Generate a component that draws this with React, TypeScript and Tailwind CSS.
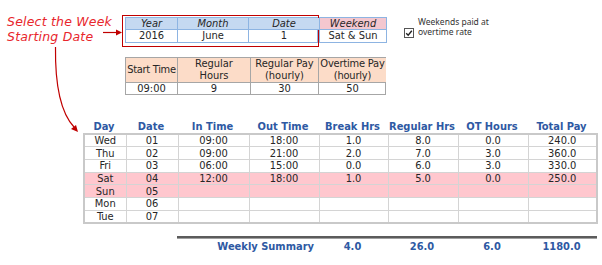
import React from "react";

const dayRows = [
  { day: "Wed", date: "01", inT: "09:00", outT: "18:00", brk: "1.0", reg: "8.0", ot: "0.0", pay: "240.0", weekend: false },
  { day: "Thu", date: "02", inT: "09:00", outT: "21:00", brk: "2.0", reg: "7.0", ot: "3.0", pay: "360.0", weekend: false },
  { day: "Fri", date: "03", inT: "06:00", outT: "15:00", brk: "0.0", reg: "6.0", ot: "3.0", pay: "330.0", weekend: false },
  { day: "Sat", date: "04", inT: "12:00", outT: "18:00", brk: "1.0", reg: "5.0", ot: "0.0", pay: "250.0", weekend: true },
  { day: "Sun", date: "05", inT: "", outT: "", brk: "", reg: "", ot: "", pay: "", weekend: true },
  { day: "Mon", date: "06", inT: "", outT: "", brk: "", reg: "", ot: "", pay: "", weekend: false },
  { day: "Tue", date: "07", inT: "", outT: "", brk: "", reg: "", ot: "", pay: "", weekend: false },
];

const headers = ["Day", "Date", "In Time", "Out Time", "Break Hrs", "Regular Hrs", "OT Hours", "Total Pay"];
const colWidths = [42, 52, 71, 70, 69, 70, 70, 69];

export default function App() {
  return (
    <div className="relative w-[602px] h-[265px] overflow-hidden bg-white text-[#262626] font-['DejaVu_Sans','Liberation_Sans',sans-serif] font-stretch-condensed text-[11px]">
      {/* top row */}
      <div className="flex items-start pt-[15px]">
        <div className="flex w-[122px] items-start pl-[7px]">
          <div className="-mt-[1px] text-[12.5px] leading-[15px] italic text-[#e8262c] font-['DejaVu_Sans',sans-serif] font-stretch-normal tracking-[0.2px]">
            <div>Select the Week</div>
            <div>Starting Date</div>
          </div>
        </div>

        <div className="w-[197px] border border-[#c00000] pl-[2px] pt-[1px] pb-[3px]">
          <div className="grid grid-cols-[52px_71px_70px] border border-[#8db4e2] w-[193px]">
            <div className="h-[12px] bg-[#c5d9f1] text-center italic leading-[12px] border-r border-b border-[#8db4e2]">Year</div>
            <div className="h-[12px] bg-[#c5d9f1] text-center italic leading-[12px] border-r border-b border-[#8db4e2]">Month</div>
            <div className="h-[12px] bg-[#c5d9f1] text-center italic leading-[12px] border-b border-[#8db4e2]">Date</div>
            <div className="h-[12px] text-center leading-[12px] border-r border-[#8db4e2]">2016</div>
            <div className="h-[12px] text-center leading-[12px] border-r border-[#8db4e2]">June</div>
            <div className="h-[12px] text-center leading-[12px]">1</div>
          </div>
        </div>

        <div className="mt-[2px] w-[68px] border border-[#8db4e2]">
          <div className="h-[12px] bg-[#f4c7cf] text-center italic leading-[12px] border-b border-[#8db4e2]">Weekend</div>
          <div className="h-[12px] text-center leading-[12px]">Sat &amp; Sun</div>
        </div>

        <div className="ml-[17px] mt-[2px] flex items-start gap-[4px]">
          <div className="mt-[11px] flex h-[10px] w-[10px] items-center justify-center border border-[#555] bg-white">
            <svg width="8" height="8" viewBox="0 0 8 8">
              <path d="M1.2 4.2 L3.2 6.2 L6.8 1.8" fill="none" stroke="#222" strokeWidth="1.4" />
            </svg>
          </div>
          <div className="font-['Noto_Sans',sans-serif] font-stretch-normal text-[8.5px] leading-[10px] text-[#333]">
            <div>Weekends paid at</div>
            <div>overtime rate</div>
          </div>
        </div>
      </div>

      {/* pay settings */}
      <div className="ml-[125px] mt-[10px] w-[261px] border border-[#a6a6a6]">
        <div className="grid grid-cols-[52px_73px_68px_67px]">
          <div className="flex h-[25px] items-center justify-center whitespace-nowrap tracking-[-0.3px] bg-[#fcdcc8] border-r border-b border-[#a6a6a6] leading-[12px]">Start Time</div>
          <div className="flex h-[25px] items-center justify-center bg-[#fcdcc8] border-r border-b border-[#a6a6a6] text-center leading-[12px]">Regular<br />Hours</div>
          <div className="flex h-[25px] items-center justify-center bg-[#fcdcc8] border-r border-b border-[#a6a6a6] text-center leading-[12px]">Regular Pay<br />(hourly)</div>
          <div className="flex h-[25px] items-center justify-center whitespace-nowrap tracking-[-0.2px] bg-[#fcdcc8] border-b border-[#a6a6a6] text-center leading-[12px]">Overtime Pay<br />(hourly)</div>
          <div className="h-[11px] text-center leading-[11px] border-r border-[#a6a6a6]">09:00</div>
          <div className="h-[11px] text-center leading-[11px] border-r border-[#a6a6a6]">9</div>
          <div className="h-[11px] text-center leading-[11px] border-r border-[#a6a6a6]">30</div>
          <div className="h-[11px] text-center leading-[11px]">50</div>
        </div>
      </div>

      {/* daily log */}
      <div className="ml-[83px] mt-[26px] w-[513px]">
        <div className="grid grid-cols-[42px_52px_71px_70px_69px_70px_70px_69px] h-[12px] font-bold text-[#2e59a3] leading-[12px]">
          {headers.map((h) => (
            <div key={h} className="text-center">{h}</div>
          ))}
        </div>
        <table className="table-fixed border-collapse border-2 border-[#c9c9c9] w-[513px]">
          <colgroup>
            {colWidths.map((w, i) => (
              <col key={i} style={{ width: w }} />
            ))}
          </colgroup>
          <tbody>
            {dayRows.map((r) => (
              <tr key={r.day} className={r.weekend ? "h-[12.7px] bg-[#ffc7ce]" : "h-[12.7px]"}>
                {[r.day, r.date, r.inT, r.outT, r.brk, r.reg, r.ot, r.pay].map((v, i) => (
                  <td key={i} className="border border-[#d4d4d4] p-0 text-center leading-[11px]">{v}</td>
                ))}
              </tr>
            ))}
          </tbody>
        </table>
      </div>

      {/* weekly summary */}
      <div className="ml-[177px] mt-[12px] w-[420px]">
        <div className="h-[3px] border-t-2 border-b border-t-[#5c5c5c] border-b-[#a0a0a0]" />
        <div className="grid grid-cols-[141px_69px_70px_70px_69px] mt-[2px] font-bold text-[#2e59a3] leading-[12px]">
          <div className="text-right pr-[4px]">Weekly Summary</div>
          <div className="text-center">4.0</div>
          <div className="text-center">26.0</div>
          <div className="text-center">6.0</div>
          <div className="text-center">1180.0</div>
        </div>
      </div>

      {/* annotation arrows */}
      <svg className="pointer-events-none absolute left-0 top-0" width="602" height="265" viewBox="0 0 602 265">
        <line x1="103" y1="32.5" x2="117" y2="32.5" stroke="#c00000" strokeWidth="1.2" />
        <path d="M116 29.5 L122 32.5 L116 35.5 Z" fill="#c00000" />
        <path d="M55.5 47 C 55 85, 60 112, 74 127" fill="none" stroke="#c00000" strokeWidth="1.2" />
        <path d="M71 129 L78 132 L76 125 Z" fill="#c00000" />
      </svg>
    </div>
  );
}
